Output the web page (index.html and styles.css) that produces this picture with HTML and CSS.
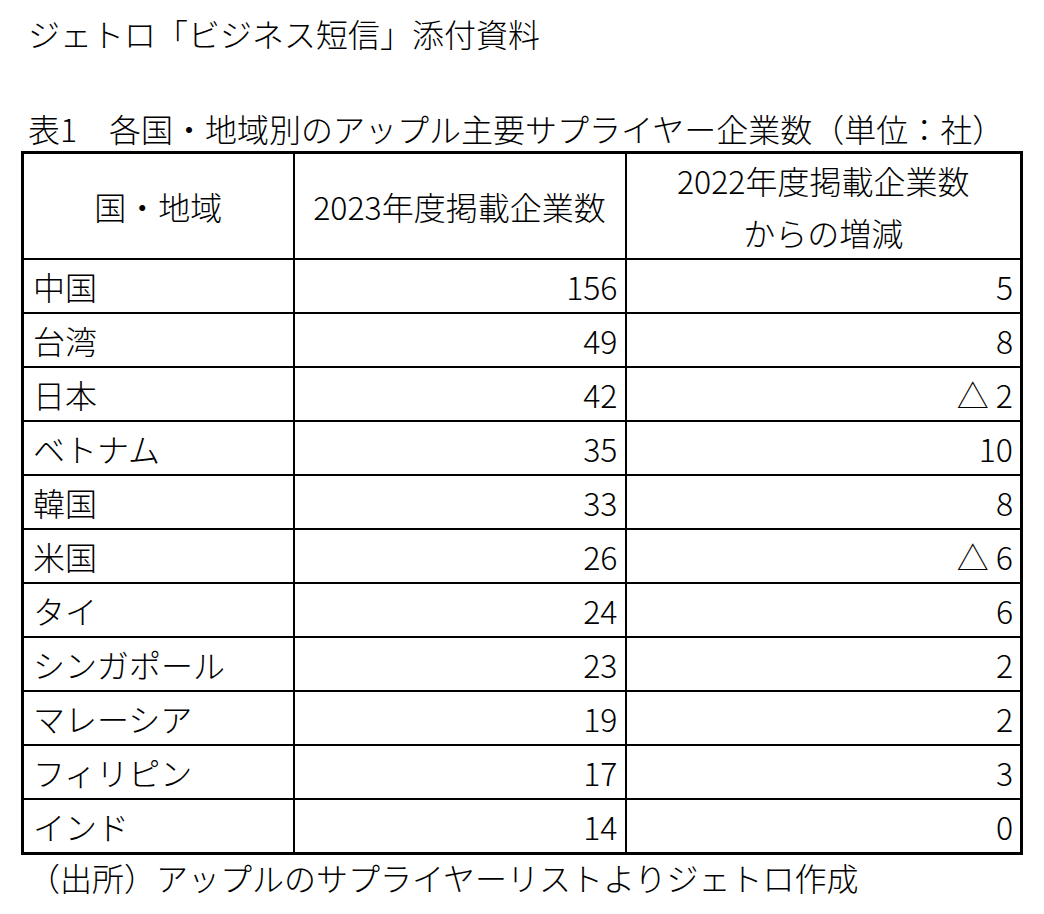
FILE: index.html
```html
<!DOCTYPE html>
<html lang="ja">
<head>
<meta charset="utf-8">
<title>ジェトロ「ビジネス短信」添付資料</title>
<link rel="stylesheet" href="styles.css">
</head>
<body>
<div class="doc">
  <h1 class="title">ジェトロ「ビジネス短信」添付資料</h1>
  <p class="caption">表1　各国・地域別のアップル主要サプライヤー企業数（単位：社）</p>
  <table class="data">
    <colgroup>
      <col class="c1">
      <col class="c2">
      <col class="c3">
    </colgroup>
    <thead>
      <tr>
        <th>国・地域</th>
        <th>2023年度掲載企業数</th>
        <th>2022年度掲載企業数<br>からの増減</th>
      </tr>
    </thead>
    <tbody>
      <tr><td class="name">中国</td><td class="num">156</td><td class="num">5</td></tr>
      <tr><td class="name">台湾</td><td class="num">49</td><td class="num">8</td></tr>
      <tr><td class="name">日本</td><td class="num">42</td><td class="num">△ 2</td></tr>
      <tr><td class="name">ベトナム</td><td class="num">35</td><td class="num">10</td></tr>
      <tr><td class="name">韓国</td><td class="num">33</td><td class="num">8</td></tr>
      <tr><td class="name">米国</td><td class="num">26</td><td class="num">△ 6</td></tr>
      <tr><td class="name">タイ</td><td class="num">24</td><td class="num">6</td></tr>
      <tr><td class="name">シンガポール</td><td class="num">23</td><td class="num">2</td></tr>
      <tr><td class="name">マレーシア</td><td class="num">19</td><td class="num">2</td></tr>
      <tr><td class="name">フィリピン</td><td class="num">17</td><td class="num">3</td></tr>
      <tr><td class="name">インド</td><td class="num">14</td><td class="num">0</td></tr>
    </tbody>
  </table>
  <p class="source">（出所）アップルのサプライヤーリストよりジェトロ作成</p>
</div>
</body>
</html>
```

FILE: styles.css
```css
html, body {
  margin: 0;
  padding: 0;
  background: #ffffff;
  color: #000000;
}

body {
  font-family: "Noto Sans CJK JP", "Noto Sans", sans-serif;
  font-size: 32px;
  font-weight: 300;
}

.doc {
  padding-top: 10px;
  padding-left: 21px;
}

.title {
  margin: 0;
  padding-left: 7px;
  font-size: 32px;
  font-weight: 300;
  line-height: 46px;
  height: 46px;
}

.caption {
  margin: 49px 0 0 0;
  padding-left: 7px;
  font-size: 32px;
  line-height: 46px;
  height: 46px;
}

.data {
  border-collapse: collapse;
  width: 999px;
  table-layout: fixed;
  border: 3px solid #000;
}

.data .c1 { width: 271px; }
.data .c2 { width: 332px; }
.data .c3 { width: 396px; }

.data th,
.data td {
  border: 2px solid #000;
  padding: 0 7px;
  font-size: 32px;
  line-height: 52px;
  white-space: nowrap;
}

.data th {
  font-weight: 300;
  text-align: center;
  height: 101px;
  line-height: 52px;
  padding: 0;
}

.data td {
  height: 52px;
}

.data td.name {
  text-align: left;
  padding-left: 9px;
}

.data td.num {
  text-align: right;
}

.source {
  margin: 0;
  padding-left: 7px;
  font-size: 32px;
  line-height: 44px;
}
```
